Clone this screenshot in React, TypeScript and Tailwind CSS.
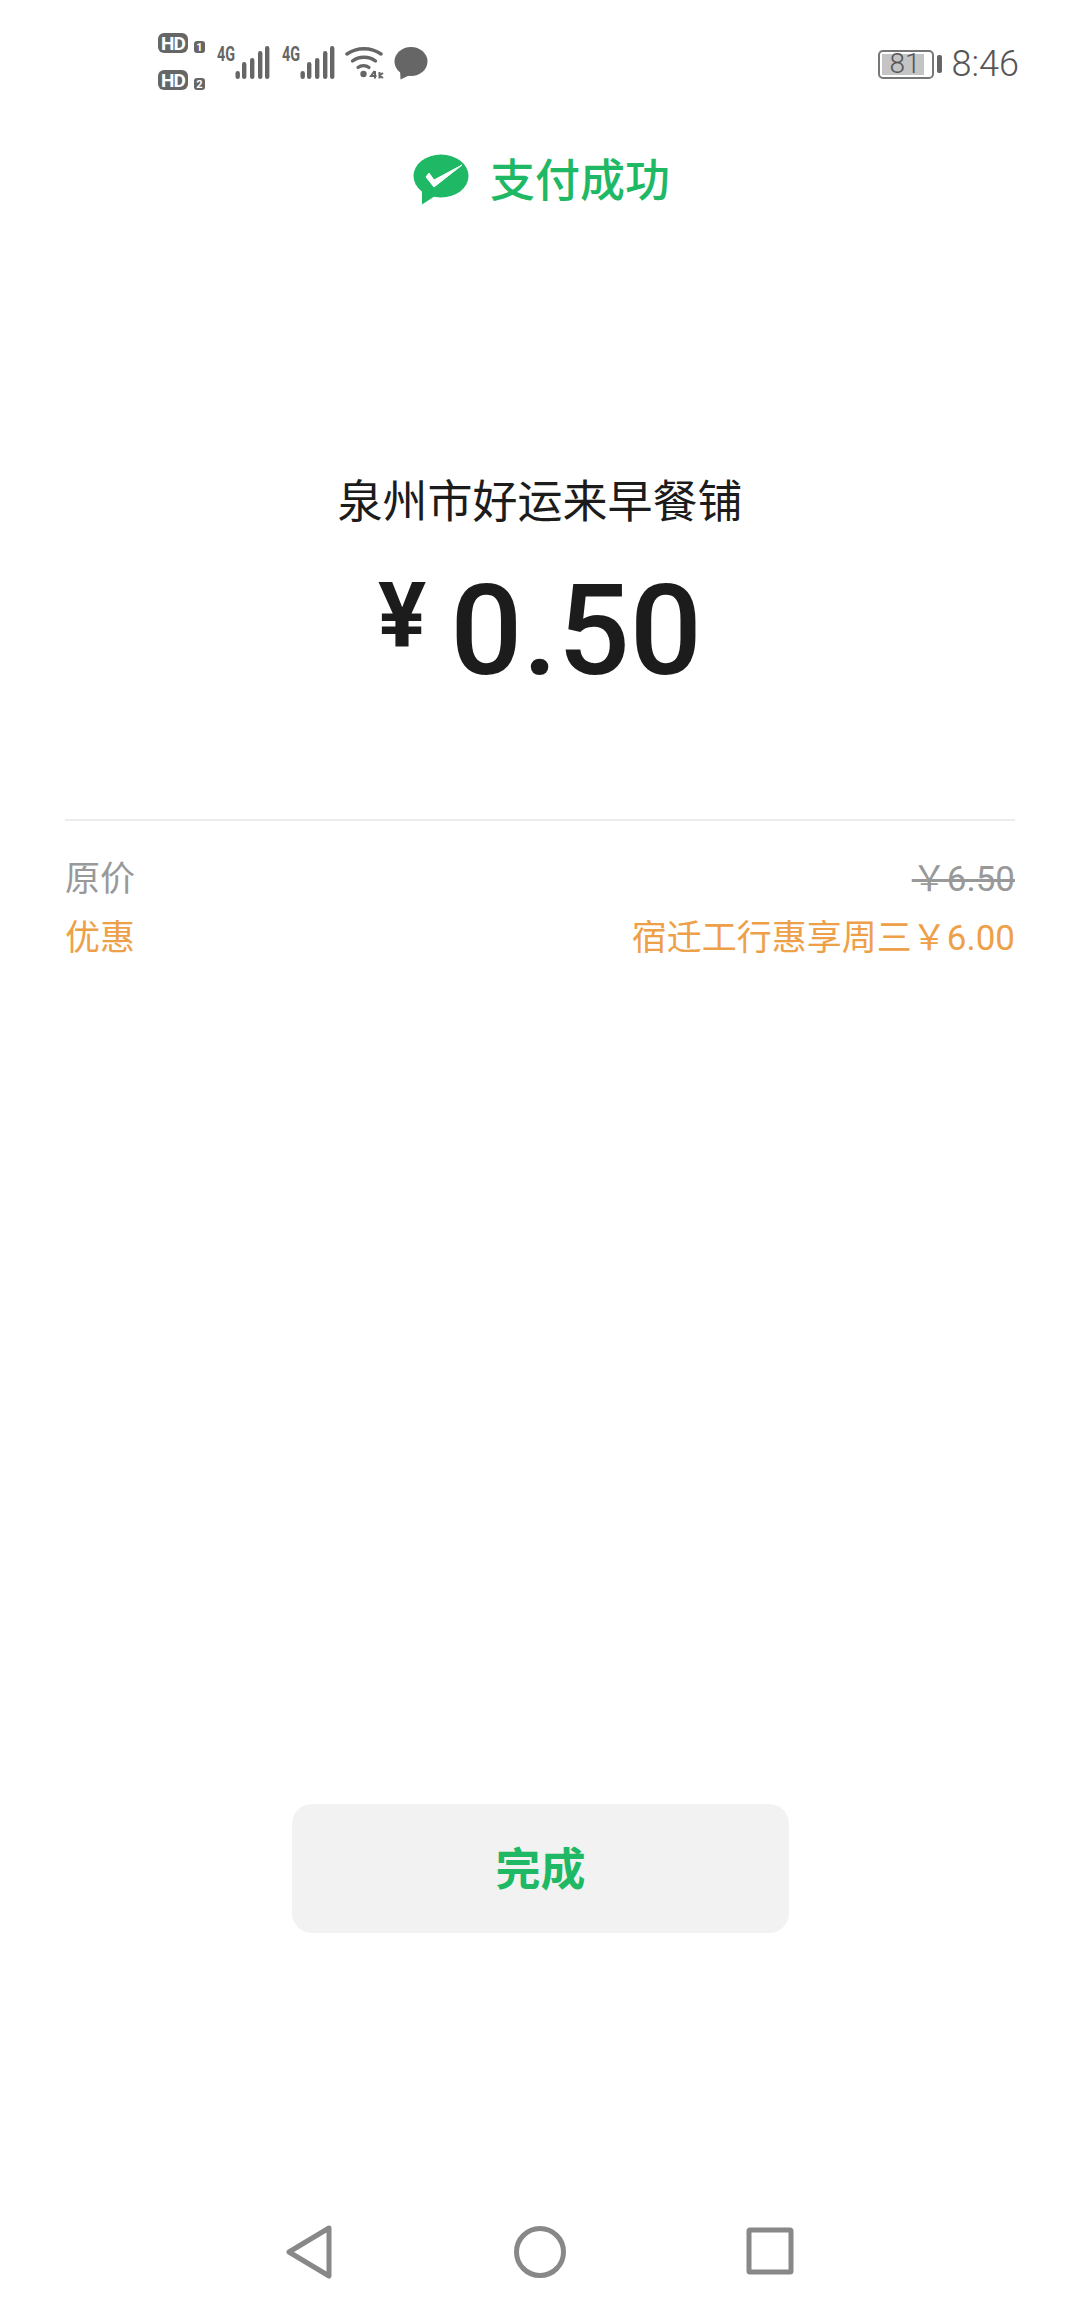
const cjk = { fontFamily: '"Roboto","Noto Sans CJK SC",sans-serif' };

function Signal() {
  const bars = [
    { x: 8, h: 17 },
    { x: 16, h: 21 },
    { x: 24, h: 28 },
    { x: 31, h: 33 },
  ];
  return (
    <svg width="35" height="34" viewBox="0 0 35 34" className="block">
      <rect x="0.5" y="26" width="4.4" height="8" rx="2.2" fill="#666" />
      {bars.map((b, i) => (
        <rect key={i} x={b.x - 1} y={34 - b.h} width="4.4" height={b.h} rx="2.2" fill="#666" />
      ))}
    </svg>
  );
}

function Net() {
  return (
    <div className="flex items-start">
      <span className="mt-[-1px] w-[18px] origin-left scale-x-[0.72] whitespace-nowrap text-[20px] leading-[20px] font-bold text-[#666]">4G</span>
      <Signal />
    </div>
  );
}

function Hd({ n }: { n: string }) {
  return (
    <div className="flex items-end gap-[6px]">
      <span className="flex h-[20px] w-[30px] items-center justify-center rounded-[6px] bg-[#666] text-[19px] leading-none font-bold tracking-[-1px] text-white">HD</span>
      <span className="flex h-[12px] w-[11px] items-center justify-center rounded-[3px] bg-[#666] text-[11px] leading-none font-bold text-white">{n}</span>
    </div>
  );
}

export default function App() {
  return (
    <div className="relative flex h-[2310px] w-[1080px] flex-col bg-white" style={cjk}>
      <div className="flex h-[100px] items-start justify-between pl-[158px] pr-[61px] pt-[33px]">
        <div className="flex items-start">
          <div className="flex flex-col gap-[17px]">
            <Hd n="1" />
            <Hd n="2" />
          </div>
          <div className="ml-[12px] flex gap-[12px] pt-[12px]">
            <Net />
            <Net />
          </div>
          <svg width="40" height="32" viewBox="0 0 40 32" className="ml-[10px] mt-[14px] block" fill="none" stroke="#666" strokeLinecap="round">
            <path d="M2 7 C12 0 26 0 36 7" strokeWidth="3.4" />
            <path d="M7.5 14 C14 9 24 9 30.5 14" strokeWidth="3.4" />
            <path d="M13 20.5 C16 18 21 18 24 20.5" strokeWidth="3.2" />
            <circle cx="18.5" cy="27" r="3.2" fill="#666" stroke="none" />
            <path d="M29.5 24 L26 29 H31.5 M30 24 V31.5 M34.5 25 V31.5 M34.5 28.5 L38 26 M34.5 28.5 L38 31" strokeWidth="2" strokeLinecap="butt" />
          </svg>
          <svg width="34" height="33" viewBox="0 0 34 33" className="ml-[9px] mt-[14px] block">
            <ellipse cx="17" cy="14.5" rx="16.5" ry="14.5" fill="#666" />
            <path d="M6 22 L6.5 32.5 L18 27 Z" fill="#666" />
          </svg>
        </div>
        <div className="flex items-center pt-[11px]">
          <div className="flex h-[29px] w-[56px] items-center rounded-[5px] border-2 border-[#777] p-[2px]">
            <div className="flex h-full w-[42px] items-center justify-center bg-[#c4c4c4] pl-[5px] text-[28px] leading-none font-light text-[#555]">81</div>
          </div>
          <div className="ml-[3px] h-[18px] w-[5px] rounded-[2px] bg-[#666]" />
          <span className="ml-[10px] text-[36px] leading-[40px] font-light text-[#555]">8:46</span>
        </div>
      </div>

      <div className="mt-[52px] flex items-center justify-center gap-[20px] pl-[2px]">
        <svg width="58" height="52" viewBox="0 0 58 52" className="block">
          <ellipse cx="29" cy="22" rx="27.5" ry="21.5" fill="#1fb864" />
          <path d="M10 37 L10 50.5 L23 42 Z" fill="#1fb864" />
          <path d="M14 23 L22 33 L50 11 L22 26 L17 19 Z" fill="#fff" stroke="#fff" strokeWidth="1" strokeLinejoin="round" />
        </svg>
        <span className="relative top-[2px] text-[45px] leading-[56px] font-medium text-[#1fb864]">支付成功</span>
      </div>

      <div className="mt-[265px] text-center text-[45px] leading-[60px] text-[#1c1c1c]">泉州市好运来早餐铺</div>

      <div className="mt-[32px] flex h-[130px] items-center justify-center text-[#1c1c1c]">
        <span className="mb-[26px] text-[90px] leading-none font-bold">¥</span>
        <span className="ml-[24px] text-[127px] leading-none font-medium">0.50</span>
      </div>

      <div className="mx-[65px] mt-[124px] h-[2px] bg-[#ececec]" />

      <div className="mx-[65px] mt-[36px] flex items-center justify-between text-[35px] leading-[46px] text-[#999]">
        <span>原价</span>
        <span className="line-through">￥6.50</span>
      </div>
      <div className="mx-[65px] mt-[13px] flex items-center justify-between text-[35px] leading-[46px] text-[#eea049]">
        <span>优惠</span>
        <span>宿迁工行惠享周三￥6.00</span>
      </div>

      <div className="mt-[842px] flex h-[129px] w-[497px] items-center justify-center self-center rounded-[20px] bg-[#f2f2f2] pl-[1px] pt-[5px] text-[45px] font-bold text-[#1fb864]">完成</div>

      <div className="mt-auto flex h-[110px] items-start justify-center gap-[180px] pt-[25px]">
        <svg width="48" height="54" viewBox="0 0 48 54" className="block" fill="none" stroke="#888" strokeWidth="5" strokeLinejoin="round">
          <path d="M43 3 L3 27 L43 51 Z" />
        </svg>
        <svg width="52" height="54" viewBox="0 0 52 54" className="block" fill="none" stroke="#888" strokeWidth="5">
          <circle cx="26" cy="27" r="23.5" />
        </svg>
        <svg width="48" height="54" viewBox="0 0 48 54" className="block" fill="none" stroke="#888" strokeWidth="5" strokeLinejoin="round">
          <rect x="3" y="5" width="42" height="42" rx="1" />
        </svg>
      </div>
    </div>
  );
}
